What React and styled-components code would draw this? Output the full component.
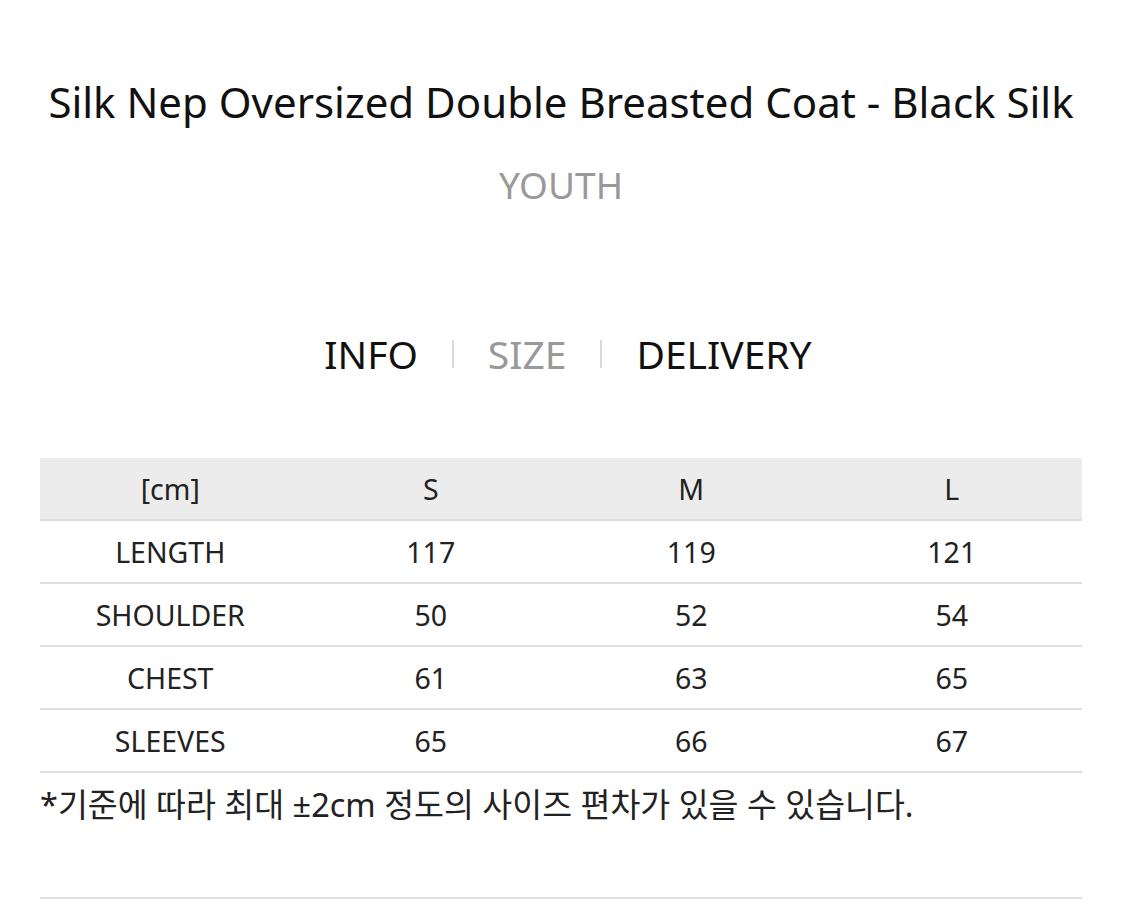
import React from "react"
import styled, { createGlobalStyle } from "styled-components"

const SIZES = ["S", "M", "L"]

const ROWS = [
  { label: "LENGTH", values: ["117", "119", "121"] },
  { label: "SHOULDER", values: ["50", "52", "54"] },
  { label: "CHEST", values: ["61", "63", "65"] },
  { label: "SLEEVES", values: ["65", "66", "67"] },
]

const TABS = [
  { label: "INFO", active: false },
  { label: "SIZE", active: true },
  { label: "DELIVERY", active: false },
]

const App = () => (
  <>
    <GlobalStyle />
    <Page>
      <Title>Silk Nep Oversized Double Breasted Coat - Black Silk</Title>
      <Brand>YOUTH</Brand>
      <Tabs>
        {TABS.map((tab, i) => (
          <React.Fragment key={tab.label}>
            {i > 0 && <Divider />}
            <Tab $muted={tab.active}>{tab.label}</Tab>
          </React.Fragment>
        ))}
      </Tabs>
      <Table>
        <HeadRow>
          <Cell>[cm]</Cell>
          {SIZES.map((s) => (
            <Cell key={s}>{s}</Cell>
          ))}
        </HeadRow>
        {ROWS.map((row) => (
          <Row key={row.label}>
            <Cell>{row.label}</Cell>
            {row.values.map((v, i) => (
              <Cell key={i}>{v}</Cell>
            ))}
          </Row>
        ))}
      </Table>
      <Note>*기준에 따라 최대 ±2cm 정도의 사이즈 편차가 있을 수 있습니다.</Note>
    </Page>
  </>
)

export default App

const GlobalStyle = createGlobalStyle`
  body {
    margin: 0;
    background: #fff;
    font-family: "Noto Sans", "Noto Sans CJK KR", sans-serif;
    color: #111;
  }
`

const Page = styled.div`
  width: 1042px;
  margin-left: 40px;
  padding-top: 72px;
`

const Title = styled.h1`
  margin: 0;
  font-size: 42px;
  font-weight: 400;
  line-height: 60px;
  text-align: center;
  color: #111;
  white-space: nowrap;
`

const Brand = styled.div`
  margin-top: 29px;
  font-size: 37px;
  line-height: 48px;
  text-align: center;
  color: #999;
`

const Tabs = styled.div`
  display: flex;
  justify-content: center;
  align-items: center;
  gap: 34px;
  margin-top: 120px;
  margin-left: 14px;
  height: 50px;
`

const Tab = styled.span`
  font-size: 39px;
  line-height: 50px;
  color: ${(p) => (p.$muted ? "#999" : "#111")};
`

const Divider = styled.span`
  width: 2px;
  height: 28px;
  background: #d8d8d8;
`

const Table = styled.div`
  margin-top: 79px;
  border-bottom: 2px solid #dedede;
`

const Row = styled.div`
  display: grid;
  grid-template-columns: repeat(4, 1fr);
  height: 61px;
  align-items: center;
  border-top: 2px solid #dedede;
`

const HeadRow = styled(Row)`
  background: #ececec;
  border-top: none;
  height: 61px;
`

const Cell = styled.div`
  text-align: center;
  font-size: 28.5px;
  color: #222;
`

const Note = styled.div`
  padding: 10px 0 0;
  height: 114px;
  font-size: 32.5px;
  line-height: 44px;
  color: #222;
  border-bottom: 2px solid #dedede;
  white-space: nowrap;
`
